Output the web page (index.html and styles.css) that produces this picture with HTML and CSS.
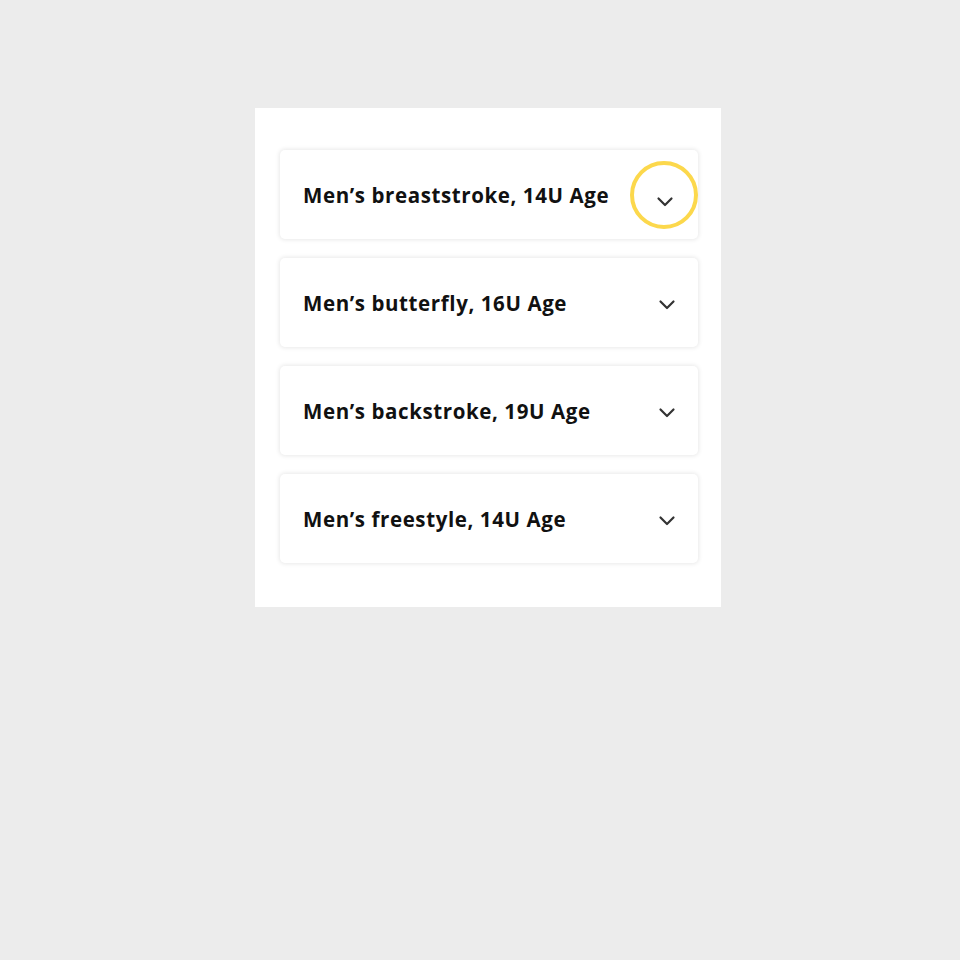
FILE: index.html
```html
<!DOCTYPE html>
<html lang="en">
<head>
    <meta charset="UTF-8">
    <meta name="viewport" content="width=device-width, initial-scale=1.0">
    <title>Events</title>
    <link rel="stylesheet" href="styles.css">
</head>
<body>

<div class="panel">
    <div class="item active">
        <span class="title">Men’s breaststroke, 14U Age</span>
        <span class="toggle">
            <svg width="18" height="11" viewBox="0 0 18 11"><path d="M2.5 2.5l6.5 6.5 6.5-6.5" fill="none" stroke="#333" stroke-width="2.2" stroke-linecap="round" stroke-linejoin="round"/></svg>
        </span>
        <span class="ring"></span>
    </div>
    <div class="item">
        <span class="title">Men’s butterfly, 16U Age</span>
        <span class="toggle">
            <svg width="18" height="11" viewBox="0 0 18 11"><path d="M2.5 2.5l6.5 6.5 6.5-6.5" fill="none" stroke="#333" stroke-width="2.2" stroke-linecap="round" stroke-linejoin="round"/></svg>
        </span>
    </div>
    <div class="item">
        <span class="title">Men’s backstroke, 19U Age</span>
        <span class="toggle">
            <svg width="18" height="11" viewBox="0 0 18 11"><path d="M2.5 2.5l6.5 6.5 6.5-6.5" fill="none" stroke="#333" stroke-width="2.2" stroke-linecap="round" stroke-linejoin="round"/></svg>
        </span>
    </div>
    <div class="item">
        <span class="title">Men’s freestyle, 14U Age</span>
        <span class="toggle">
            <svg width="18" height="11" viewBox="0 0 18 11"><path d="M2.5 2.5l6.5 6.5 6.5-6.5" fill="none" stroke="#333" stroke-width="2.2" stroke-linecap="round" stroke-linejoin="round"/></svg>
        </span>
    </div>
</div>

</body>
</html>
```

FILE: styles.css
```css
body {
    margin: 0;
    padding: 108px 0 0 255px;
    background-color: #ececec;
    font-family: "Open Sans", Arial, sans-serif;
}
.panel {
    width: 466px;
    box-sizing: border-box;
    padding: 42px 23px 44px 25px;
    background-color: #ffffff;
    display: flex;
    flex-direction: column;
    gap: 19px;
}
.item {
    position: relative;
    height: 89px;
    display: flex;
    align-items: center;
    justify-content: space-between;
    padding: 0 22px 0 23px;
    background-color: #ffffff;
    border-radius: 5px;
    box-shadow: 0 0 4px 1px rgba(0, 0, 0, 0.09);
}
.title {
    font-size: 20.5px;
    font-weight: 700;
    color: #111;
    letter-spacing: 0.6px;
}
.toggle {
    display: flex;
    width: 18px;
    height: 11px;
    margin-top: 3px;
}
.active .toggle {
    margin-top: 13px;
    margin-right: 2px;
}
.ring {
    position: absolute;
    left: 350px;
    top: 11px;
    width: 60px;
    height: 60px;
    border: 4px solid #fcd84c;
    border-radius: 50%;
}
```
